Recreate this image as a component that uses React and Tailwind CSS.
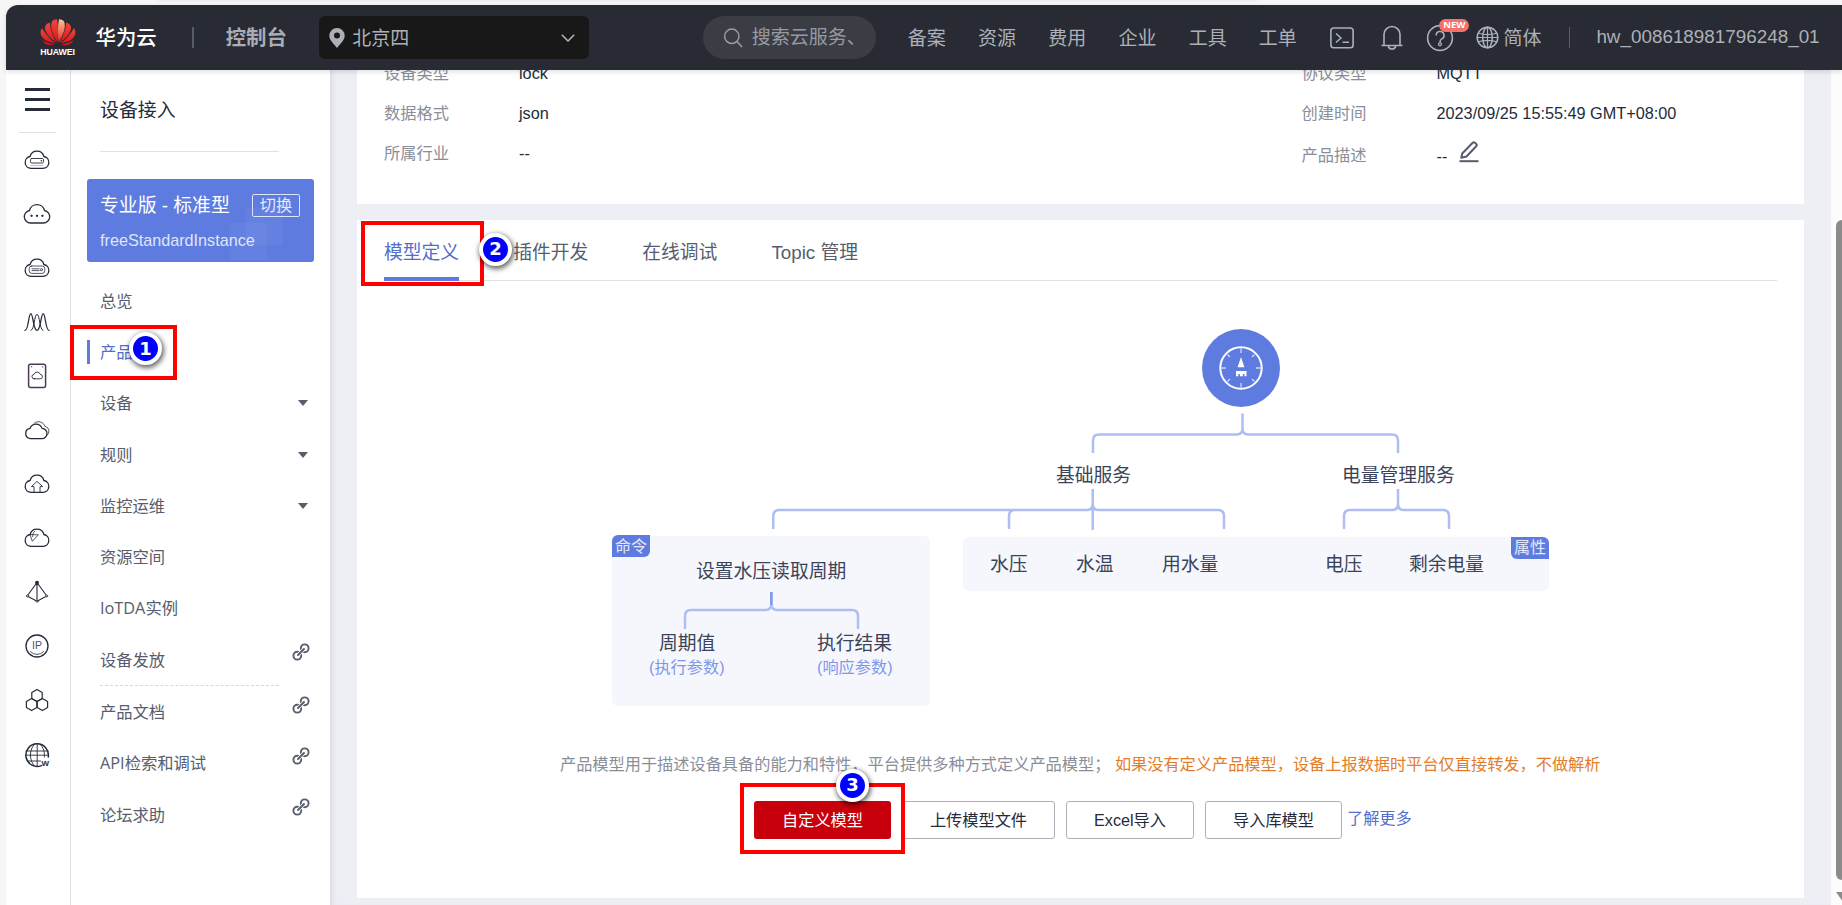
import React from "react";

const CLOUD = "M7 18.4h12a6 6 0 0 0 .9-11.9 7.1 7.1 0 0 0-13.8 0A6 6 0 0 0 7 18.4z";

function RailSvg({ children, w = 26, h = 20, sw = 1.3 }) {
  return (
    <svg
      width={w}
      height={h}
      viewBox={`0 0 ${w} ${h}`}
      fill="none"
      stroke="#252b3a"
      strokeWidth={sw}
      strokeLinejoin="round"
      strokeLinecap="round"
    >
      {children}
    </svg>
  );
}

const railIcons = [
  <RailSvg>
    <path d={CLOUD} />
    <rect x="6.5" y="8.5" width="13" height="4.5" rx="1.2" strokeWidth="0.9" />
    <path d="M17.3 10.7h.2" strokeWidth="1.4" />
    <path d="M7 15.4h12" strokeWidth="1" stroke="#b9bcd0" />
  </RailSvg>,
  <RailSvg w={28} h={22}>
    <path d="M7.5 20h13a6.3 6.3 0 0 0 1-12.5 7.7 7.7 0 0 0-15 0 6.3 6.3 0 0 0 1 12.5z" />
    <path d="M8.5 12.8h.2M13.9 12.8h.2M19.3 12.8h.2" strokeWidth="2.2" />
  </RailSvg>,
  <RailSvg>
    <path d={CLOUD} />
    <rect x="5.2" y="8" width="15.6" height="7.4" rx="2.6" strokeWidth="0.8" />
    <path d="M8 10.8h7M8 12.6h7" strokeWidth="0.8" />
    <circle cx="17.4" cy="11.7" r="1.1" strokeWidth="0.8" />
  </RailSvg>,
  <RailSvg>
    <path d="M1 18.4c3.6 0 3.4-16.8 5.8-16.8s2.4 16.8 6.2 16.8 3.8-16.8 6.2-16.8 2.2 16.8 5.8 16.8" strokeWidth="1.3" />
    <path d="M7 18.4c3.6-.6 3.2-16 6-16s2.400 15.400 6 16" strokeWidth="1" />
  </RailSvg>,
  <RailSvg h={26}>
    <rect x="4.6" y="1.2" width="17" height="23.4" rx="2" stroke="#4b3a5c" strokeWidth="1.5" />
    <path d="M10.3 15.8h5.8a2.2 2.2 0 0 0 .2-4.4 3.3 3.3 0 0 0-6.3 0 2.2 2.2 0 0 0 .3 4.4z" strokeWidth="0.9" />
    <path d="M7.5 3.8h.3M18.5 3.8h.3" strokeWidth="1" />
  </RailSvg>,
  <RailSvg>
    <path d="M6.3 18.6h11.4a5.1 5.1 0 0 0 .4-10.2 6.4 6.4 0 0 0-12-.1 5.2 5.2 0 0 0 .2 10.3z" />
    <path d="M10.5 3a6.5 6.5 0 0 1 10.3 3.2 5.2 5.2 0 0 1 1.6 9.6" strokeWidth="0.8" />
  </RailSvg>,
  <RailSvg>
    <path d={CLOUD} />
    <path d="M10 18v-5.4H7.4L13 7.4l5.6 5.2H16V18" strokeWidth="0.9" />
  </RailSvg>,
  <RailSvg>
    <path d={CLOUD} />
    <path d="M6.4 6.6l8 .2-5.8 6.2z" strokeWidth="0.8" />
    <path d="M10.8 3.2c-1.6 1.4-2.2 3.4-2.2 5.4" strokeWidth="0.8" />
  </RailSvg>,
  <RailSvg h={24}>
    <path d="M13 2.5L3.2 16 13 21.2 22.8 16zM13 2.5v18.7" strokeWidth="1.1" />
    <circle cx="13" cy="2.6" r="1.3" fill="#252b3a" />
    <circle cx="3.4" cy="16" r="1" fill="#fff" strokeWidth="0.8" />
    <circle cx="22.6" cy="16" r="1" fill="#fff" strokeWidth="0.8" />
    <circle cx="13" cy="21.3" r="1" fill="#fff" strokeWidth="0.8" />
  </RailSvg>,
  <RailSvg h={26}>
    <circle cx="13" cy="13" r="11" />
    <path d="M6.5 18.6a8.6 8.6 0 0 0 13 0" strokeWidth="0.8" />
    <text x="13" y="16.4" textAnchor="middle" fontSize="10.5" fontFamily="Liberation Sans, sans-serif" fill="#4a5070" stroke="none">
      IP
    </text>
  </RailSvg>,
  <RailSvg h={24}>
    <path d="M13 1.4l5.2 3v6l-5.2 3-5.2-3v-6z" strokeWidth="1.2" />
    <path d="M7.6 10.6l5.2 3v6l-5.2 3-5.2-3v-6z" strokeWidth="1.2" />
    <path d="M18.4 10.6l5.2 3v6l-5.2 3-5.2-3v-6z" strokeWidth="1.2" />
  </RailSvg>,
  <RailSvg h={26}>
    <path d="M17.5 23.6A11.3 11.3 0 1 1 24.3 15" strokeWidth="1.5" />
    <path d="M13.2 1.8v22M2 9h22M2 13.2h22.6M4 19h12.5" strokeWidth="0.9" />
    <path d="M10.5 2.2C5 7.5 5 18.5 10.5 24M16 2.2c3.6 3.4 4.8 8 4.4 12.8" strokeWidth="0.9" />
    <text x="21.4" y="24" textAnchor="middle" fontSize="8" fontWeight="700" fontFamily="Liberation Sans, sans-serif" fill="#252b3a" stroke="none">
      W
    </text>
  </RailSvg>,
];

const menuTop = [
  { label: "总览" },
  { label: "产品", active: true },
  { label: "设备", caret: true },
  { label: "规则", caret: true },
  { label: "监控运维", caret: true },
  { label: "资源空间" },
  { label: "IoTDA实例" },
  { label: "设备发放", link: true },
];
const menuBottom = [
  { label: "产品文档", link: true },
  { label: "API检索和调试", link: true },
  { label: "论坛求助", link: true },
];

function LinkIcon() {
  return (
    <svg width="18" height="18" viewBox="0 0 18 18" fill="none" stroke="#575d6c" className="mb-[15px]">
      <circle cx="5.3" cy="12.7" r="3.9" strokeWidth="1.9" />
      <circle cx="12.7" cy="5.3" r="3.9" strokeWidth="1.9" />
      <path d="M6.500 11.500l5-5" stroke="#fff" strokeWidth="3.600" />
      <path d="M6 12l6-6" strokeWidth="1.900" strokeLinecap="round" />
    </svg>
  );
}

function Step({ n, className }) {
  return (
    <div
      className={`absolute z-20 flex size-[33px] items-center justify-center rounded-full border-4 border-white bg-[#0000ff] font-['DejaVu_Sans'] text-[18px] leading-none font-bold text-white shadow-[1px_2px_5px_1px_rgba(0,0,0,0.6)] ${className}`}
    >
      {n}
    </div>
  );
}

function MenuRow({ item }) {
  return (
    <div className="relative flex h-[51.3px] items-center justify-between pr-[20px] pl-[29px]">
      {item.active && <div className="absolute top-[14px] left-[16px] h-6 w-[3px] bg-[#5e7ce0]" />}
      <span
        className={`font-['Open_Sans','Noto_Sans_CJK_SC',sans-serif] text-[16.3px] leading-6 ${item.active ? "text-[#526ecc]" : "text-[#575d6c]"}`}
      >
        {item.label}
      </span>
      {item.caret && (
        <svg width="10" height="6" viewBox="0 0 10 6" className="mr-[2px]">
          <path d="M0 0h10L5 6z" fill="#575d6c" />
        </svg>
      )}
      {item.link && <LinkIcon />}
      {item.active && (
        <>
          <div className="absolute -top-[1px] -left-px z-10 h-[55px] w-[107px] border-4 border-[#ff0000]" />
          <Step n="1" className="top-[6px] left-[58px]" />
        </>
      )}
    </div>
  );
}

function HuaweiLogo() {
  return (
    <div className="flex w-[36px] flex-col items-center">
      <svg width="36" height="28" viewBox="0 0 36 28">
        <defs>
          <linearGradient id="petal" x1="0" y1="0" x2="0" y2="1">
            <stop offset="0" stopColor="#f0473a" />
            <stop offset="1" stopColor="#d8161c" />
          </linearGradient>
          <linearGradient id="petalLight" x1="0" y1="0" x2="0" y2="1">
            <stop offset="0" stopColor="#fbc49a" />
            <stop offset="1" stopColor="#e02a22" />
          </linearGradient>
        </defs>
        <path d="M17.5 24.500C12.500 16.500 10 9 11.700 4c.9-2 2.900-2.800 5.300-2.800 1.300 6 1.300 14 .5 23.300z" fill="url(#petal)" />
        <path d="M18.500 24.500C23.500 16.500 26 9 24.300 4c-.9-2-2.900-2.800-5.300-2.800-1.300 6-1.300 14-.5 23.300z" fill="url(#petalLight)" />
        <path d="M16.500 24.700C9.500 20 4.600 14 4.900 9.500 5.100 7 7.500 5 9.700 4.400 10.300 11 12.700 18 16.500 24.700z" fill="url(#petal)" />
        <path d="M19.500 24.700c7-4.700 11.900-10.700 11.600-15.200-.2-2.500-2.600-4.500-4.800-5.100C25.700 11 23.300 18 19.500 24.700z" fill="url(#petal)" />
        <path d="M15.400 25.500C8 24 1.800 21 .8 16.500.2 14 .8 11.700 2 10.300c3.500 5.700 8.200 11.200 13.400 15.200z" fill="url(#petal)" />
        <path d="M20.600 25.500c7.400-1.500 13.600-4.500 14.600-9 .6-2.500 0-4.800-1.200-6.200-3.500 5.700-8.200 11.200-13.400 15.200z" fill="url(#petal)" />
        <path d="M14.800 26.200c-4.900 2.300-10.500 1.100-12.200-4.300 3.800 2.300 8.100 3.800 12.200 4.300z" fill="#c9141a" />
        <path d="M21.200 26.200c4.900 2.300 10.500 1.100 12.200-4.300-3.800 2.300-8.100 3.800-12.200 4.300z" fill="#c9141a" />
      </svg>
      <span className="mt-[2px] font-['Liberation_Sans'] text-[8.800px] leading-[9px] font-bold tracking-[-0.1px] text-white">HUAWEI</span>
    </div>
  );
}

function Header() {
  return (
    <header className="relative z-30 flex h-[65px] shrink-0 items-center rounded-tl-[12px] bg-[#282b33] text-[19px] text-[#adb0b8] shadow-[0_2px_5px_rgba(0,0,0,0.12)]">
      <div className="ml-[33.500px]">
        <HuaweiLogo />
      </div>
      <span className="ml-5 pt-[2px] text-[20.400px] leading-none font-medium text-white">华为云</span>
      <div className="ml-[35px] h-[21px] w-[2px] bg-[#575d6c]" />
      <span className="ml-[32px] pt-[2px] text-[20.400px] leading-none font-bold text-[#a9abb5]">控制台</span>
      <div className="ml-[32px] flex h-[43px] w-[270px] items-center rounded-[6px] bg-[#181818] pr-[14px] pl-[10.500px]">
        <svg width="16" height="20" viewBox="0 0 16 20">
          <path d="M8 0a7.700 7.700 0 0 0-7.700 7.700C.3 12.500 5 15.500 8 20c3-4.500 7.700-7.500 7.700-12.300A7.700 7.700 0 0 0 8 0zm0 10.600a3 3 0 1 1 0-6 3 3 0 0 1 0 6z" fill="#adb0b8" />
        </svg>
        <span className="ml-[7px] pt-px text-[19px] leading-none">北京四</span>
        <svg width="14" height="8" viewBox="0 0 14 8" className="ml-auto" fill="none" stroke="#adb0b8" strokeWidth="1.6">
          <path d="M.8.8L7 7 13.200.8" />
        </svg>
      </div>
      <div className="ml-[114px] flex h-[43px] w-[173px] items-center rounded-full bg-[#3b3d45] pl-[20px] text-[#8a8e99]">
        <svg width="20" height="20" viewBox="0 0 20 20" fill="none" stroke="#9a9ca3" strokeWidth="1.5">
          <circle cx="8.800" cy="8.300" r="7.200" />
          <path d="M14 13.500l5 5.500" />
        </svg>
        <span className="ml-[9px] text-[19px] leading-none whitespace-nowrap text-[#989aa2]">搜索云服务、</span>
      </div>
      <nav className="ml-8 flex gap-[32.200px] pt-[2px] leading-none whitespace-nowrap">
        <span>备案</span>
        <span>资源</span>
        <span>费用</span>
        <span>企业</span>
        <span>工具</span>
        <span>工单</span>
      </nav>
      <svg width="24" height="22" viewBox="0 0 24 22" fill="none" stroke="#adb0b8" strokeWidth="1.600" className="ml-[33px]">
        <rect x="0.900" y="1" width="22.200" height="19.800" rx="2.800" />
        <path d="M6 6.500l5 4.500-5 4.500M12.500 15.300h6.500" strokeWidth="1.500" />
      </svg>
      <svg width="24" height="26" viewBox="0 0 24 26" fill="none" stroke="#adb0b8" strokeWidth="1.600" className="ml-[26px]" strokeLinejoin="round">
        <path d="M1.500 20.500h21M4 20.300V9.500a8 8 0 0 1 16 0v10.800" />
        <path d="M8.200 21a3.900 3.900 0 0 0 7.600 0" />
      </svg>
      <div className="relative ml-[22.500px]">
        <svg width="28" height="28" viewBox="0 0 28 28" fill="none" stroke="#adb0b8" strokeWidth="1.600">
          <circle cx="14" cy="14" r="12.400" />
          <path d="M10.200 11.500a3.900 3.900 0 1 1 5.600 3.400c-1.300.7-1.700 1.300-1.700 2.700v1" />
          <circle cx="14" cy="20.300" r="1.500" strokeWidth="1.300" />
        </svg>
        <span className="absolute -top-[5px] left-[13px] flex h-[13px] w-[30px] items-center justify-center rounded-full bg-[#f66f6a] font-['Open_Sans'] text-[9.500px] leading-none font-bold text-white">
          NEW
        </span>
      </div>
      <svg width="23" height="23" viewBox="0 0 23 23" fill="none" stroke="#adb0b8" strokeWidth="1.500" className="ml-[22px]">
        <circle cx="11.500" cy="11.500" r="10.300" />
        <ellipse cx="11.500" cy="11.500" rx="4.800" ry="10.300" />
        <path d="M11.500 1v21M2.500 7.200c5 1.600 13 1.600 18 0M2.500 15.800c5-1.600 13-1.600 18 0M1 11.500h21" strokeWidth="1.200" />
      </svg>
      <span className="ml-[4px] pt-px leading-none">简体</span>
      <div className="ml-[27.500px] h-[21px] w-px bg-[#575d6c]" />
      <span className="ml-[26.500px] pb-px font-['Liberation_Sans'] text-[18.850px] leading-none">hw_008618981796248_01</span>
    </header>
  );
}

function Rail() {
  return (
    <aside className="flex w-[65px] shrink-0 flex-col items-center border-r border-[#dfe1e6] bg-white pr-[2px]">
      <div className="mt-[18px] flex h-[23px] w-[25px] flex-col justify-between">
        <div className="h-[3px] bg-[#252b3a]" />
        <div className="h-[3px] bg-[#252b3a]" />
        <div className="h-[3px] bg-[#252b3a]" />
      </div>
      <div className="mt-[21px] h-px w-[37px] bg-[#dfe1e6]" />
      {railIcons.map((icon, i) => (
        <div key={i} className="flex h-[54.050px] shrink-0 items-center">
          {icon}
        </div>
      ))}
    </aside>
  );
}

function Sidebar() {
  return (
    <aside className="w-[259px] shrink-0 bg-white">
      <div className="mx-[29px] flex h-[82px] w-[179px] items-start border-b border-[#dfe1e6] pt-[27px] text-[18.900px] leading-7 text-[#252b3a]">
        设备接入
      </div>
      <div className="relative mt-[27px] ml-4 h-[83px] w-[227px] overflow-hidden rounded-[3px] bg-[#5e7ce0] pl-[13px] text-white">
        <div className="absolute top-[29px] left-[159px] size-[37px] bg-white/4" />
        <div className="absolute top-[44px] left-[143px] size-[37px] bg-white/4" />
        <div className="relative flex items-center justify-between pt-[15px] pr-[14px]">
          <span className="text-[18.850px] leading-6">专业版 - 标准型</span>
          <span className="-mt-px flex h-[23px] w-12 items-center justify-center rounded-[2px] border border-[#dfe5fb] text-[16.200px] leading-none text-[#e4e9fc]">切换</span>
        </div>
        <div className="relative mt-[10px] text-[16.200px] leading-6 text-[#dfe5fb]">freeStandardInstance</div>
      </div>
      <div className="mt-[13px]">
        {menuTop.map((m) => (
          <MenuRow key={m.label} item={m} />
        ))}
      </div>
      <div className="ml-[29px] w-[179px] border-t border-dashed border-[#d5d7dd]" />
      {menuBottom.map((m) => (
        <MenuRow key={m.label} item={m} />
      ))}
    </aside>
  );
}

function InfoCard() {
  return (
    <section className="flex h-[134px] shrink-0 overflow-hidden bg-white text-[16.250px] leading-6">
      <div className="-mt-[9px] ml-[27px] flex w-[917.500px] flex-col gap-[16px] text-[#252b3a]">
        <div className="flex">
          <span className="w-[135px] text-[#8a8e99]">设备类型</span>lock
        </div>
        <div className="flex">
          <span className="w-[135px] text-[#8a8e99]">数据格式</span>json
        </div>
        <div className="flex">
          <span className="w-[135px] text-[#8a8e99]">所属行业</span>--
        </div>
      </div>
      <div className="-mt-[9px] flex flex-col gap-[16px] text-[#252b3a]">
        <div className="flex">
          <span className="w-[135px] text-[#8a8e99]">协议类型</span>MQTT
        </div>
        <div className="flex">
          <span className="w-[135px] text-[#8a8e99]">创建时间</span>2023/09/25 15:55:49 GMT+08:00
        </div>
        <div className="flex pt-[2px]">
          <span className="w-[135px] text-[#8a8e99]">产品描述</span>
          <span className="pt-px">--</span>
          <svg width="20" height="22" viewBox="0 0 20 22" fill="none" stroke="#575d6c" strokeWidth="2" strokeLinejoin="round" className="-mt-[2px] ml-[12px]">
            <path d="M3.200 12.500L13.700 1.700c.6-.6 1.300-.6 1.900-.1l1.700 1.500c.6.600.6 1.300.1 1.900L7.500 15.500l-5.200 1.300z" />
            <path d="M.5 20.200h19" strokeLinecap="butt" />
          </svg>
        </div>
      </div>
    </section>
  );
}

const nodeLabels = [
  ["left-[699px] top-[233px]", "基础服务"],
  ["left-[985px] top-[233px]", "电量管理服务"],
  ["left-[339px] top-[329px]", "设置水压读取周期"],
  ["left-[302px] top-[401px]", "周期值"],
  ["left-[460px] top-[401px]", "执行结果"],
  ["left-[633px] top-[322px]", "水压"],
  ["left-[719px] top-[322px]", "水温"],
  ["left-[805px] top-[322px]", "用水量"],
  ["left-[968px] top-[322px]", "电压"],
  ["left-[1052px] top-[322px]", "剩余电量"],
];

function Diagram() {
  return (
    <div className="relative h-[464px] shrink-0">
      {/* canvas origin: left edge of the card, just below the tab bar */}
      <div className="absolute inset-0 -top-[47px]">
        <div className="absolute top-[302px] left-[255px] h-[170px] w-[318px] rounded-[6px] bg-[#f6f7fd]" />
        <div className="absolute top-[303px] left-[606px] h-[54px] w-[586px] rounded-[6px] bg-[#f6f7fd]" />
        <div className="absolute top-[301px] left-[255px] flex h-[22px] w-[38px] items-center justify-center rounded-tl-[6px] rounded-br-[6px] bg-[#5e7ce0] pt-px text-[16px] leading-none text-[#e4e9fb]">
          命令
        </div>
        <div className="absolute top-[303px] left-[1154px] flex h-[22px] w-[38px] items-center justify-center rounded-tr-[6px] rounded-bl-[6px] bg-[#5e7ce0] text-[16px] leading-none text-[#e4e9fb]">
          属性
        </div>
        {/* connector drawing, offset so that viewBox units equal window pixels */}
        <svg width="820" height="320" viewBox="750 320 820 320" className="absolute top-[86px] left-[393px]" fill="none" stroke="#aebdf2" strokeWidth="2.500">
          <circle cx="1241" cy="368" r="39" fill="#5e7ce0" stroke="none" />
          <circle cx="1241" cy="368" r="20.700" stroke="#fff" strokeWidth="2" />
          <path
            d="M1241 348.500v4.500M1241 383v4.500M1221.500 368h4.500M1256 368h4.500M1227.500 354.500l2.500 2.500M1252 379l2.500 2.500M1254.500 354.500l-2.500 2.500M1230 379l-2.500 2.500"
            stroke="#cfd8f7"
            strokeWidth="1.300"
          />
          <path d="M1241 357l3.400 10.200h-6.800z" fill="#fff" stroke="none" />
          <path d="M1236 371h10.500v5.200h-2v-2.200h-1.600v2.200h-3v-2.200h-1.600v2.200H1236z" fill="#fff" stroke="none" />
          <path d="M1242.500 413.500v15q0 6-6 6h-137.500q-6 0-6 6V453M1242.500 413.500v15q0 6 6 6H1392q6 0 6 6V453" />
          <path d="M1092.700 489v15q0 6-6 6H779.300q-6 0-6 6v13M1092.700 489v15q0 6 6 6H1218q6 0 6 6v13M1092.700 489v41M1009 529v-13q0-6 6-6" />
          <path d="M1398 489v15q0 6-6 6h-42q-6 0-6 6v13M1398 489v15q0 6 6 6h39q6 0 6 6v13" />
        </svg>
        <svg width="180" height="42" viewBox="680 590 180 42" className="absolute top-[356px] left-[323px]" fill="none" stroke="#aebdf2" strokeWidth="2.500">
          <path d="M771.300 592v12q0 6-6 6H691q-6 0-6 6v13M771.300 592v12q0 6 6 6H852q6 0 6 6v13" />
          <path d="M771.300 592v13" stroke="#7f98e8" />
        </svg>
        {nodeLabels.map(([pos, text]) => (
          <span key={text} className={`absolute text-[18.800px] leading-none whitespace-nowrap text-[#3b4358] ${pos}`}>
            {text}
          </span>
        ))}
        <span className="absolute top-[425px] left-[292px] text-[16.200px] leading-none whitespace-nowrap text-[#7f97ea]">(执行参数)</span>
        <span className="absolute top-[425px] left-[460px] text-[16.200px] leading-none whitespace-nowrap text-[#7f97ea]">(响应参数)</span>
      </div>
    </div>
  );
}

function ModelCard() {
  const plain = "flex h-[38px] items-center justify-center rounded-[3px] border border-[#adb0b8] bg-white text-[#252b3a]";
  return (
    <section className="relative flex h-[678px] shrink-0 flex-col bg-white">
      <div className="mx-[27px] flex h-[61px] shrink-0 gap-[54px] border-b border-[#dfe1e6] text-[18.800px] leading-none text-[#575d6c]">
        <div className="relative flex h-[60px] items-center pt-[7px] text-[#526ecc]">
          模型定义
          <div className="absolute -bottom-px left-0 h-1 w-full bg-[#5e7ce0]" />
        </div>
        <div className="flex h-[60px] items-center pt-[7px]">插件开发</div>
        <div className="flex h-[60px] items-center pt-[7px]">在线调试</div>
        <div className="flex h-[60px] items-center pt-[7px]">Topic 管理</div>
      </div>
      <Diagram />
      <div className="flex h-[38px] items-center pl-[203px] text-[16.200px] leading-6 whitespace-pre text-[#8a8e99]">
        产品模型用于描述设备具备的能力和特性，平台提供多种方式定义产品模型； <span className="text-[#e37d29]">如果没有定义产品模型，设备上报数据时平台仅直接转发，不做解析</span>
      </div>
      <div className="mt-[18px] flex items-center pl-[397px] text-[16.200px] leading-none">
        <div className="flex h-[38px] w-[137px] items-center justify-center rounded-[3px] bg-[#c7000b] text-white">自定义模型</div>
        <div className={`ml-[11px] w-[153px] ${plain}`}>上传模型文件</div>
        <div className={`ml-[11px] w-[128px] ${plain}`}>Excel导入</div>
        <div className={`ml-[11px] w-[137px] ${plain}`}>导入库模型</div>
        <span className="ml-[5px] pb-[4px] text-[#526ecc]">了解更多</span>
      </div>
      <div className="absolute top-px left-[4px] z-10 h-[65px] w-[123px] border-4 border-[#ff0000]" />
      <Step n="2" className="top-[12.500px] left-[122px]" />
      <div className="absolute top-[563px] left-[383px] z-10 h-[71px] w-[165px] border-4 border-[#ff0000]" />
      <Step n="3" className="top-[548.500px] left-[479px]" />
    </section>
  );
}

export default function App() {
  return (
    <div className="flex h-[905px] w-[1842px] flex-col overflow-hidden bg-[#f6f6f6] pl-[6px] font-['Liberation_Sans','Noto_Sans_CJK_SC',sans-serif]">
      <div className="h-[5px] shrink-0">
        <div className="ml-[152px] h-[2px] w-[1100px] rounded-b bg-[#efefef]" />
      </div>
      <Header />
      <div className="flex min-h-0 flex-1 overflow-hidden">
        <Rail />
        <Sidebar />
        <main className="flex w-[1501px] shrink-0 flex-col gap-4 bg-[#eeeff5] pr-[27px] pl-[27px] shadow-[inset_5px_0_5px_-3px_rgba(80,85,110,0.12)]">
          <InfoCard />
          <ModelCard />
        </main>
        <div className="flex flex-1 flex-col items-end overflow-hidden bg-[#fcfcfc]">
          <div className="mt-[150px] h-[660px] w-[6px] shrink-0 rounded-l-[6px] bg-[#8b8b8b]" />
          <svg width="6" height="10" viewBox="0 0 6 10" className="mt-3 shrink-0">
            <path d="M0 0h6v8.500z" fill="#8b8b8b" />
          </svg>
        </div>
      </div>
    </div>
  );
}
